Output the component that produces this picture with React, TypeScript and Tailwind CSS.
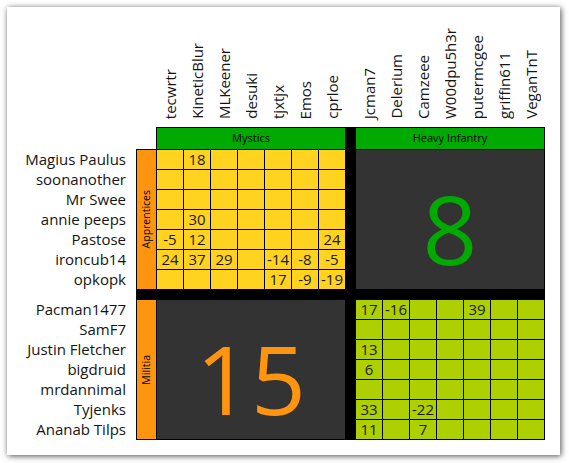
const mysticNames = ["tecwrtr", "KineticBlur", "MLKeener", "desuki", "tjxtjx", "Emos", "cprloe"];
const heavyNames = ["Jcman7", "Delerium", "Camzeee", "W00dpu5h3r", "putermcgee", "griffin611", "VeganTnT"];

const apprentices = ["Magius Paulus", "soonanother", "Mr Swee", "annie peeps", "Pastose", "ironcub14", "opkopk"];
const militia = ["Pacman1477", "SamF7", "Justin Fletcher", "bigdruid", "mrdannimal", "Tyjenks", "Ananab Tilps"];

const apprenticeScores: (number | null)[][] = [
  [null, 18, null, null, null, null, null],
  [null, null, null, null, null, null, null],
  [null, null, null, null, null, null, null],
  [null, 30, null, null, null, null, null],
  [-5, 12, null, null, null, null, 24],
  [24, 37, 29, null, -14, -8, -5],
  [null, null, null, null, 17, -9, -19],
];

const militiaScores: (number | null)[][] = [
  [17, -16, null, null, 39, null, null],
  [null, null, null, null, null, null, null],
  [13, null, null, null, null, null, null],
  [6, null, null, null, null, null, null],
  [null, null, null, null, null, null, null],
  [33, null, -22, null, null, null, null],
  [11, null, 7, null, null, null, null],
];

function ColumnLabels({ names }: { names: string[] }) {
  return (
    <div className="grid grid-cols-[repeat(7,27px)] self-end pb-[8px]">
      {names.map((n) => (
        <div key={n} className="flex items-end justify-center pl-[2px]">
          <span className="rotate-180 whitespace-nowrap text-[15px] leading-none text-[#141414] [writing-mode:vertical-rl]">
            {n}
          </span>
        </div>
      ))}
    </div>
  );
}

function NameList({ names }: { names: string[] }) {
  return (
    <div className="flex flex-col pt-px pr-[10px]">
      {names.map((n) => (
        <div key={n} className="h-[20px] text-right text-[15px] leading-[19px] whitespace-nowrap text-[#141414]">
          {n}
        </div>
      ))}
    </div>
  );
}

function ScoreGrid({ scores, color }: { scores: (number | null)[][]; color: string }) {
  return (
    <div className="grid grid-cols-[repeat(7,26px)] grid-rows-[repeat(7,19px)] gap-px border border-black bg-black">
      {scores.flat().map((v, i) => (
        <div key={i} className={`${color} text-center text-[15px] leading-[19px] text-[#1a1a1a]`}>
          {v ?? ""}
        </div>
      ))}
    </div>
  );
}

function BigTotal({ value, color }: { value: number; color: string }) {
  return (
    <div className="flex items-center justify-center border border-black bg-[#333333] pt-[16px]">
      <span className={`${color} text-[96px] leading-none`}>{value}</span>
    </div>
  );
}

export default function App() {
  return (
    <div className="h-[463px] w-[569px] bg-white pt-[7px] pl-[7px] font-['Open_Sans',sans-serif]">
      <div className="grid h-[448px] w-[553px] grid-cols-[129px_20px_190px_9px_190px] grid-rows-[120px_22px_141px_9px_141px] content-start bg-white shadow-[1px_1px_6px_rgba(0,0,0,0.7)]">
        {/* row 1: rotated player names */}
        <div className="col-start-3 row-start-1 flex">
          <ColumnLabels names={mysticNames} />
        </div>
        <div className="col-start-5 row-start-1 flex">
          <ColumnLabels names={heavyNames} />
        </div>

        {/* row 2: group headers */}
        <div className="col-start-3 row-start-2 flex items-center justify-center border-x border-t border-black bg-[#00aa00] text-[11px] text-black">
          Mystics
        </div>
        <div className="col-start-4 row-span-4 row-start-2 bg-black" />
        <div className="col-start-5 row-start-2 flex items-center justify-center border-x border-t border-black bg-[#00aa00] text-[11px] text-black">
          Heavy Infantry
        </div>

        {/* row 3: apprentices */}
        <div className="col-start-1 row-start-3">
          <NameList names={apprentices} />
        </div>
        <div className="col-start-2 row-start-3 flex items-center justify-center border-y border-l border-black bg-[#ff950e]">
          <span className="rotate-180 text-[10.5px] leading-none text-black [writing-mode:vertical-rl]">Apprentices</span>
        </div>
        <div className="col-start-3 row-start-3">
          <ScoreGrid scores={apprenticeScores} color="bg-[#ffd320]" />
        </div>
        <div className="col-start-5 row-start-3 grid">
          <BigTotal value={8} color="text-[#00aa00]" />
        </div>

        {/* row 4: divider */}
        <div className="col-span-4 col-start-2 row-start-4 bg-black" />

        {/* row 5: militia */}
        <div className="col-start-1 row-start-5">
          <NameList names={militia} />
        </div>
        <div className="col-start-2 row-start-5 flex items-center justify-center border-y border-l border-black bg-[#ff950e]">
          <span className="rotate-180 text-[10.5px] leading-none text-black [writing-mode:vertical-rl]">Militia</span>
        </div>
        <div className="col-start-3 row-start-5 grid">
          <BigTotal value={15} color="text-[#ff950e]" />
        </div>
        <div className="col-start-5 row-start-5">
          <ScoreGrid scores={militiaScores} color="bg-[#aecf00]" />
        </div>
      </div>
    </div>
  );
}
